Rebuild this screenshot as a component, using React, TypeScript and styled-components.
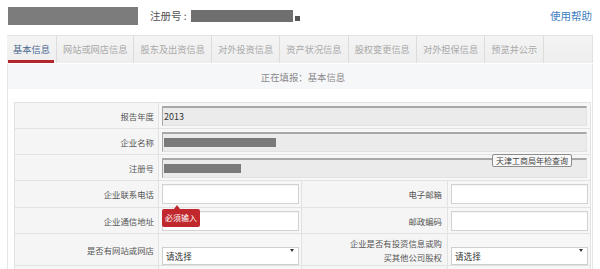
import React from 'react';
import styled, { createGlobalStyle } from 'styled-components';

const GlobalStyle = createGlobalStyle`
  html, body { margin: 0; padding: 0; background: #fff; }
  body {
    width: 600px;
    height: 269px;
    overflow: hidden;
    font-family: "Noto Sans CJK SC", "Noto Sans", sans-serif;
  }
  * { box-sizing: border-box; }
`;

const Page = styled.div`
  width: 600px;
`;

const Header = styled.header`
  height: 35px;
  display: flex;
  align-items: flex-start;
  padding: 7px 8px 0 8px;
`;

const NameBlock = styled.div`
  width: 130px;
  height: 18px;
  background: #7c7c7c;
`;

const RegLabel = styled.div`
  margin-left: 12px;
  margin-top: 2px;
  font-size: 10.5px;
  line-height: 14px;
  color: #555;
  display: flex;
  align-items: center;
`;

const RegBar = styled.span`
  display: inline-block;
  width: 102px;
  height: 12px;
  margin-left: 4px;
  background: #6f6f6f;
`;

const RegDot = styled.span`
  display: inline-block;
  width: 5px;
  height: 5px;
  margin-left: 2px;
  margin-top: 4px;
  background: #555;
`;

const HelpLink = styled.a`
  margin-left: auto;
  margin-top: 2px;
  font-size: 10.5px;
  line-height: 14px;
  color: #3f7fc2;
  text-decoration: none;
`;

const TabBar = styled.nav`
  margin-left: 7px;
  width: 586px;
  height: 28px;
  border-top: 1px solid #e2e2e2;
  border-right: 1px solid #e2e2e2;
  background: linear-gradient(#f4f4f4, #eeeeee);
  display: flex;
`;

const Tab = styled.div<{ $active?: boolean }>`
  position: relative;
  display: flex;
  align-items: center;
  padding: 0 6.1px 2px 6.1px;
  font-size: 9.2px;
  color: ${(p) => (p.$active ? '#4a6890' : '#a9a9a9')};
  border-right: 1px solid #dcdcdc;
  white-space: nowrap;
  &::after {
    content: '';
    display: ${(p) => (p.$active ? 'block' : 'none')};
    position: absolute;
    left: 1px;
    right: 2px;
    bottom: 0;
    height: 3px;
    background: #b3262c;
  }
`;

const Panel = styled.section`
  margin-left: 7px;
  width: 586px;
  height: 206px;
  border-left: 1px solid #e6e6e6;
  border-right: 1px solid #e6e6e6;
`;

const Notice = styled.div`
  height: 25px;
  margin-top: 1px;
  background: #f6f7f9;
  display: flex;
  align-items: center;
  justify-content: center;
  padding-left: 6px;
  font-size: 9.4px;
  color: #8a8a8a;
`;

const FormTable = styled.div`
  margin: 13px 1px 0 6px;
  width: 577px;
  border-top: 1px solid #e2e2e2;
  border-left: 1px solid #e2e2e2;
  border-right: 1px solid #e2e2e2;
`;

const FormRow = styled.div<{ $h: number }>`
  display: grid;
  grid-template-columns: 144px 143px 146px 142px;
  height: ${(p) => p.$h}px;
  border-bottom: 1px solid #e2e2e2;
`;

const LabelCell = styled.div<{ $pr?: number }>`
  display: flex;
  align-items: center;
  justify-content: flex-end;
  text-align: right;
  padding-right: ${(p) => p.$pr ?? 4}px;
  font-size: 8.4px;
  line-height: 14px;
  color: #555;
  background: #f5f5f5;
  border-right: 1px solid #e2e2e2;
`;

const ValueCell = styled.div<{ $span?: number; $last?: boolean }>`
  position: relative;
  grid-column: span ${(p) => p.$span ?? 1};
  display: flex;
  align-items: center;
  padding: 0 2px 0 3px;
  background: #f7f7f7;
  border-right: ${(p) => (p.$last ? 'none' : '1px solid #e2e2e2')};
`;

const ReadonlyField = styled.div`
  flex: 1;
  height: 20px;
  margin-right: 1px;
  display: flex;
  align-items: center;
  padding-left: 1px;
  background: #ebebeb;
  border-style: solid;
  border-width: 2px 1px 1px 1px;
  border-color: #a8a8a8 #e2e2e2 #e2e2e2 #a8a8a8;
  font-size: 9px;
  color: #333;
`;

const Redacted = styled.span<{ $w: number }>`
  display: inline-block;
  width: ${(p) => p.$w}px;
  height: 9px;
  background: #7a7a7a;
`;

const TextInput = styled.input`
  width: 100%;
  height: 20px;
  border: 1px solid #d2d2d2;
  background: #fff;
  box-shadow: inset 0 1px 1px rgba(0, 0, 0, 0.05);
  outline: none;
  padding: 0 3px;
  font-size: 9px;
`;

const SelectWrap = styled.div`
  position: relative;
  width: 100%;
  height: 18px;
`;

const Select = styled.select`
  appearance: none;
  width: 100%;
  height: 18px;
  border: 1px solid #cfcfcf;
  background: #fff;
  padding: 0 3px;
  font-family: "Noto Sans CJK SC", "Noto Sans", sans-serif;
  font-size: 8.6px;
  color: #333;
  outline: none;
`;

const SelectArrow = styled.span`
  position: absolute;
  right: 5px;
  top: 8px;
  width: 0;
  height: 0;
  border-left: 2px solid transparent;
  border-right: 2px solid transparent;
  border-top: 3px solid #333;
  pointer-events: none;
`;

const QueryTip = styled.div`
  position: absolute;
  left: 333px;
  top: -1px;
  height: 13px;
  padding: 0 3px;
  border: 1px solid #8c8c8c;
  border-radius: 2px;
  background: #f8f8f8;
  font-size: 8px;
  line-height: 11px;
  color: #444;
  white-space: nowrap;
  z-index: 2;
`;

const ErrorTip = styled.div`
  position: absolute;
  left: 3px;
  top: 28px;
  height: 18px;
  padding: 0 3px;
  border-radius: 2px;
  background: #c0282e;
  font-size: 8px;
  line-height: 18px;
  color: #fff;
  white-space: nowrap;
  z-index: 3;
  &::before {
    content: '';
    position: absolute;
    left: 12px;
    top: -4px;
    border-left: 3px solid transparent;
    border-right: 3px solid transparent;
    border-bottom: 4px solid #c0282e;
  }
`;

const tabs = [
  '基本信息',
  '网站或网店信息',
  '股东及出资信息',
  '对外投资信息',
  '资产状况信息',
  '股权变更信息',
  '对外担保信息',
  '预览并公示',
];

function SelectField() {
  return (
    <SelectWrap>
      <Select defaultValue="">
        <option value="">请选择</option>
        <option value="1">是</option>
        <option value="0">否</option>
      </Select>
      <SelectArrow />
    </SelectWrap>
  );
}

export default function App() {
  return (
    <Page>
      <GlobalStyle />
      <Header>
        <NameBlock />
        <RegLabel>
          注册号 :<RegBar />
          <RegDot />
        </RegLabel>
        <HelpLink href="#">使用帮助</HelpLink>
      </Header>
      <TabBar>
        {tabs.map((t, i) => (
          <Tab key={t} $active={i === 0}>
            {t}
          </Tab>
        ))}
      </TabBar>
      <Panel>
        <Notice>正在填报：基本信息</Notice>
        <FormTable>
          <FormRow $h={26}>
            <LabelCell>报告年度</LabelCell>
            <ValueCell $span={3} $last>
              <ReadonlyField>2013</ReadonlyField>
            </ValueCell>
          </FormRow>
          <FormRow $h={26}>
            <LabelCell>企业名称</LabelCell>
            <ValueCell $span={3} $last>
              <ReadonlyField>
                <Redacted $w={112} />
              </ReadonlyField>
            </ValueCell>
          </FormRow>
          <FormRow $h={26}>
            <LabelCell>注册号</LabelCell>
            <ValueCell $span={3} $last>
              <ReadonlyField>
                <Redacted $w={77} />
              </ReadonlyField>
              <QueryTip>天津工商局年检查询</QueryTip>
            </ValueCell>
          </FormRow>
          <FormRow $h={27}>
            <LabelCell>企业联系电话</LabelCell>
            <ValueCell>
              <TextInput />
              <ErrorTip>必须输入</ErrorTip>
            </ValueCell>
            <LabelCell $pr={5}>电子邮箱</LabelCell>
            <ValueCell $last>
              <TextInput />
            </ValueCell>
          </FormRow>
          <FormRow $h={26}>
            <LabelCell>企业通信地址</LabelCell>
            <ValueCell>
              <TextInput />
            </ValueCell>
            <LabelCell $pr={5}>邮政编码</LabelCell>
            <ValueCell $last>
              <TextInput />
            </ValueCell>
          </FormRow>
          <FormRow $h={32}>
            <LabelCell>是否有网站或网店</LabelCell>
            <ValueCell>
              <SelectField />
            </ValueCell>
            <LabelCell $pr={5}>
              企业是否有投资信息或购
              <br />
              买其他公司股权
            </LabelCell>
            <ValueCell $last>
              <SelectField />
            </ValueCell>
          </FormRow>
          <FormRow $h={26}>
            <LabelCell />
            <ValueCell />
            <LabelCell $pr={5} />
            <ValueCell $last />
          </FormRow>
        </FormTable>
      </Panel>
    </Page>
  );
}
